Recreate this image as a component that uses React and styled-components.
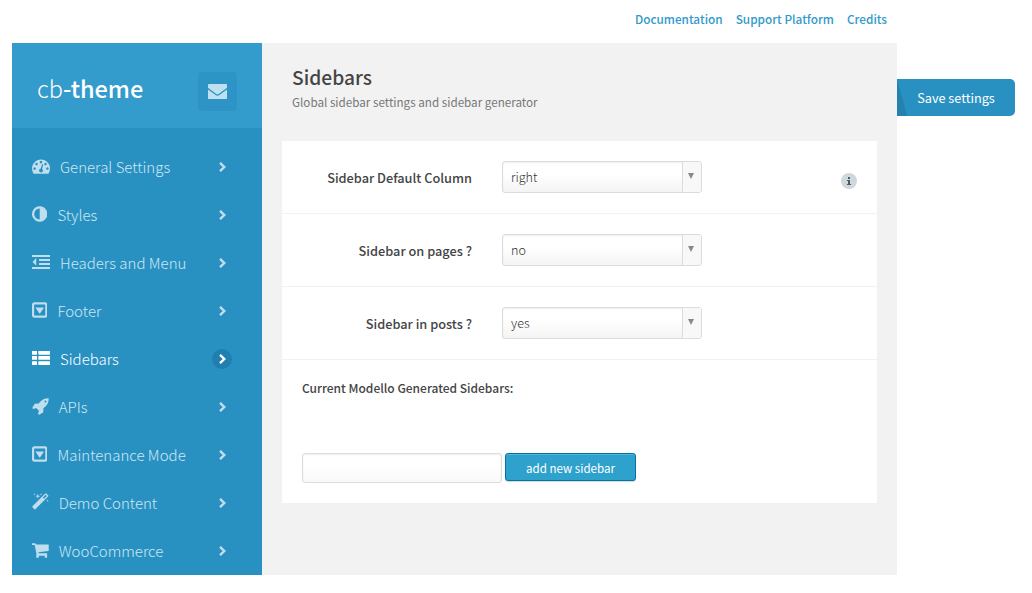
import React from 'react';
import styled, { createGlobalStyle } from 'styled-components';

const GlobalStyle = createGlobalStyle`
  *, *::before, *::after { box-sizing: border-box; }
  body {
    margin: 0;
    background: #fff;
    color: #444;
    font-family: "Noto Sans CJK SC", "Noto Sans", sans-serif;
    overflow: hidden;
  }
  button, input { font-family: inherit; }
`;

const Page = styled.div`
  width: 1032px;
  height: 593px;
  padding-left: 12px;
`;

const TopNav = styled.nav`
  width: 885px;
  height: 43px;
  padding: 9px 10px 0 0;
  display: flex;
  justify-content: flex-end;
  gap: 13px;
`;

const TopLink = styled.a`
  color: #3199cb;
  font-size: 11.8px;
  font-weight: 500;
  line-height: 20px;
  white-space: nowrap;
`;

const Body = styled.div`
  display: flex;
  height: 532px;
  align-items: flex-start;
`;

const Sidebar = styled.aside`
  width: 250px;
  height: 532px;
  background: #2991c2;
`;

const Brand = styled.header`
  height: 85px;
  padding: 5px 25px 0;
  background: #349bcd;
  display: flex;
  align-items: center;
  justify-content: space-between;
`;

const Logo = styled.div`
  color: #fff;
  font-size: 23.5px;
  font-weight: 300;
  line-height: 30px;
  b { font-weight: 500; }
`;

const MailButton = styled.button`
  width: 39px;
  height: 39px;
  margin-top: 7px;
  padding: 0;
  border: 0;
  border-radius: 4px;
  background: #2e94c5;
  color: #bfe0ef;
  display: flex;
  align-items: center;
  justify-content: center;
`;

const Menu = styled.nav`
  padding-top: 15px;
`;

const MenuItem = styled.a`
  height: 48px;
  padding: 0 30px 0 20px;
  display: flex;
  align-items: center;
  color: ${(p) => (p.$active ? '#fff' : '#bfdfee')};
`;

const MenuLabel = styled.span`
  flex: 1;
  margin-left: 10px;
  color: ${(p) => (p.$active ? '#fff' : '#cde7f3')};
  font-size: 15px;
  font-weight: 300;
  line-height: 24px;
  white-space: nowrap;
`;

const Arrow = styled.span`
  width: 20px;
  height: 20px;
  border-radius: 50%;
  background: ${(p) => (p.$active ? '#1f7fae' : 'transparent')};
  display: flex;
  align-items: center;
  justify-content: center;
`;

const Content = styled.main`
  width: 635px;
  height: 532px;
  padding: 20px 20px 0;
  background: #f2f2f2;
`;

const Heading = styled.div`
  height: 78px;
  padding-left: 10px;
`;

const Title = styled.h1`
  margin: 0 0 1px;
  color: #444;
  font-size: 19.2px;
  font-weight: 500;
  line-height: 28px;
`;

const Subtitle = styled.p`
  margin: 0;
  color: #777;
  font-size: 11.67px;
  font-weight: 400;
  line-height: 19px;
`;

const Card = styled.section`
  width: 595px;
  height: 362px;
  background: #fff;
`;

const Field = styled.div`
  height: 73px;
  padding: 20px;
  border-bottom: 1px solid #f2f2f2;
  display: flex;
  align-items: flex-start;
`;

const FieldLabel = styled.label`
  width: 170px;
  margin-right: 30px;
  text-align: right;
  font-size: 12.75px;
  font-weight: 500;
  line-height: 34px;
  white-space: nowrap;
`;

const Select = styled.div`
  width: 200px;
  height: 32px;
  border: 1px solid #dcdcdc;
  border-radius: 3px;
  background: linear-gradient(#fff 40%, #f4f4f4);
  box-shadow: inset 0 1px 2px rgba(0, 0, 0, 0.07);
  display: flex;
  overflow: hidden;
`;

const SelectValue = styled.span`
  flex: 1;
  padding-left: 8px;
  color: #333;
  font-size: 12.6px;
  font-weight: 300;
  line-height: 29px;
`;

const SelectArrow = styled.span`
  width: 19px;
  border-left: 1px solid #dcdcdc;
  background: #f8f8f8;
  display: flex;
  justify-content: center;
  padding-top: 11px;
  &::before {
    content: '';
    width: 0;
    height: 0;
    margin-right: 2px;
    border: 3px solid transparent;
    border-top: 6px solid #888;
    border-bottom: 0;
  }
`;

const Info = styled.span`
  width: 16px;
  height: 16px;
  margin: 12px 0 0 auto;
  border-radius: 50%;
  background: #cfd8dd;
  color: #4c5a62;
  display: flex;
  align-items: center;
  justify-content: center;
`;

const Generator = styled.div`
  padding: 17px 20px 0;
`;

const GeneratorTitle = styled.h2`
  margin: 0 0 55px;
  font-size: 12px;
  font-weight: 500;
  line-height: 21px;
`;

const GeneratorRow = styled.div`
  display: flex;
  align-items: flex-start;
  gap: 3px;
`;

const TextInput = styled.input`
  width: 200px;
  height: 30px;
  padding: 0 8px;
  border: 1px solid #dcdcdc;
  border-radius: 3px;
  background: linear-gradient(#fff 40%, #f9f9f9);
  box-shadow: inset 0 1px 2px rgba(0, 0, 0, 0.07);
`;

const AddButton = styled.button`
  width: 131px;
  height: 28px;
  padding: 2px 0 0;
  border: 1px solid #0074a2;
  border-radius: 3px;
  background: #2ea2cc;
  box-shadow: inset 0 1px 0 rgba(120, 200, 230, 0.5), 0 1px 0 rgba(0, 0, 0, 0.15);
  color: #fff;
  font-size: 11.55px;
  line-height: 24px;
`;

const SaveButton = styled.button`
  width: 118px;
  height: 37px;
  margin-top: 36px;
  padding: 0;
  border: 0;
  border-radius: 0 5px 5px 0;
  background: linear-gradient(to top right, #2581ad 50%, #2991c2 51%) 0 0 / 10px 37px no-repeat, #2991c2;
  color: #fff;
  font-size: 12.7px;
`;

const glyphs = {
  dash: {
    box: [0, 1792],
    d: 'M384 1152q0-53-37.5-90.5t-90.5-37.5-90.5 37.5-37.5 90.5 37.5 90.5 90.5 37.5 90.5-37.5 37.5-90.5zm192-448q0-53-37.5-90.5t-90.5-37.5-90.5 37.5-37.5 90.5 37.5 90.5 90.5 37.5 90.5-37.5 37.5-90.5zm428 481l101-382q6-26-7.5-48.5t-38.5-29.5-48 6.5-30 39.5l-101 382q-60 5-107 43.5t-63 98.5q-20 77 20 146t117 89 146-20 89-117q16-60-6-117t-72-91zm660-33q0-53-37.5-90.5t-90.5-37.5-90.5 37.5-37.5 90.5 37.5 90.5 90.5 37.5 90.5-37.5 37.5-90.5zm-640-640q0-53-37.5-90.5t-90.5-37.5-90.5 37.5-37.5 90.5 37.5 90.5 90.5 37.5 90.5-37.5 37.5-90.5zm448 192q0-53-37.5-90.5t-90.5-37.5-90.5 37.5-37.5 90.5 37.5 90.5 90.5 37.5 90.5-37.5 37.5-90.5zm320 448q0 261-141 483-19 29-54 29h-1402q-35 0-54-29-141-221-141-483 0-182 71-348t191-286 286-191 348-71 348 71 286 191 191 286 71 348z',
  },
  adjust: {
    box: [128, 1536],
    d: 'M896 1440v-1088q-148 0-273 73t-198 198-73 273 73 273 198 198 273 73zm768-544q0 209-103 385.5t-279.5 279.5-385.5 103-385.5-103-279.5-279.5-103-385.5 103-385.5 279.5-279.5 385.5-103 385.5 103 279.5 279.5 103 385.5z',
  },
  outdent: {
    box: [0, 1792],
    d: 'M0 200h1792v200H0zM0 1394h1792v200H0zM704 598h1088v200H704zM704 996h1088v200H704zM420 530v690q0 20-30 10L80 915q-20-19 0-38L390 522q30-20 30 8z',
  },
  caret: {
    box: [128, 1536],
    d: 'M350 128h1092q90 0 156 66t66 156v1092q0 90-66 156t-156 66h-1092q-90 0-156-66t-66-156v-1092q0-90 66-156t156-66zM376 340q-32 0-32 32v1044q0 32 32 32h1040q32 0 32-32v-1044q0-32-32-32zM520 640h752q50 0 20 60l-350 510q-46 60-92 0l-350-510q-30-60 20-60z',
  },
  list: {
    box: [0, 1792],
    d: 'M40 192h420q40 0 40 40v300q0 40-40 40H40q-40 0-40-40V232q0-40 40-40zM670 192h1082q40 0 40 40v300q0 40-40 40H670q-40 0-40-40V232q0-40 40-40zM40 700h420q40 0 40 40v300q0 40-40 40H40q-40 0-40-40V740q0-40 40-40zM670 700h1082q40 0 40 40v300q0 40-40 40H670q-40 0-40-40V740q0-40 40-40zM40 1208h420q40 0 40 40v300q0 40-40 40H40q-40 0-40-40v-300q0-40 40-40zM670 1208h1082q40 0 40 40v300q0 40-40 40H670q-40 0-40-40v-300q0-40 40-40z',
  },
  rocket: {
    box: [0, 1664],
    d: 'M1440 448q0-40-28-68t-68-28-68 28-28 68 28 68 68 28 68-28 28-68zm224-288q0 249-75.5 430.500t-253.500 360.500q-81 80-195 176l-20 379q-2 16-16 26l-384 224q-7 4-16 4-12 0-23-9l-64-64q-13-14-8-32l85-276-281-281-276 85q-3 1-9 1-14 0-23-9l-64-64q-17-19-5-39l224-384q10-14 26-16l379-20q96-114 176-195 188-187 358-258t431-71q14 0 24 9.500t10 22.500z',
  },
  magic: {
    box: [0, 1664],
    d: 'M1190 581l293-293-107-107-293 293zm447-293q0 27-18 45l-1286 1286q-18 18-45 18t-45-18l-198-198q-18-18-18-45t18-45l1286-1286q18-18 45-18t45 18l198 198q18 18 18 45zm-1351-190l98 30-98 30-30 98-30-98-98-30 98-30 30-98zm350 162l196 60-196 60-60 196-60-196-196-60 196-60 60-196zm930 478l98 30-98 30-30 98-30-98-98-30 98-30 30-98zm-640-640l98 30-98 30-30 98-30-98-98-30 98-30 30-98z',
  },
  cart: {
    box: [64, 1664],
    d: 'M80 230h300q44 0 54 44l20 70h1274v620q0 36-36 42L700 1110l20 110h850v440h-240v-190H740v190H490v-290l30-60-190-920H80q-26 0-26-80t26-80z',
  },
};

const GlyphSvg = styled.svg`
  display: block;
  flex: none;
  height: 18px;
  margin-bottom: 2px;
  fill: currentColor;
  fill-rule: evenodd;
`;

function Glyph({ name }) {
  const { box, d } = glyphs[name];
  return (
    <GlyphSvg width={(box[1] * 18) / 1792} viewBox={`${box[0]} 0 ${box[1]} 1792`}>
      <path d={d} />
    </GlyphSvg>
  );
}

const items = [
  ['dash', 'General Settings'],
  ['adjust', 'Styles'],
  ['outdent', 'Headers and Menu'],
  ['caret', 'Footer'],
  ['list', 'Sidebars'],
  ['rocket', 'APIs'],
  ['caret', 'Maintenance Mode'],
  ['magic', 'Demo Content'],
  ['cart', 'WooCommerce'],
];

const fields = [
  ['Sidebar Default Column', 'right', true],
  ['Sidebar on pages ?', 'no'],
  ['Sidebar in posts ?', 'yes'],
];

export default function App() {
  return (
    <Page>
      <GlobalStyle />
      <TopNav>
        <TopLink>Documentation</TopLink>
        <TopLink>Support Platform</TopLink>
        <TopLink>Credits</TopLink>
      </TopNav>
      <Body>
        <Sidebar>
          <Brand>
            <Logo>cb<b>-theme</b></Logo>
            <MailButton aria-label="Messages">
              <svg width="19" height="15" viewBox="0 0 19 15" fill="currentColor">
                <path d="M1 0h17q1 0 1 1v2.800L10.700 9.900q-1.200.8-2.400 0L0 3.800V1q0-1 1-1zM0 5.500l7.600 5.600q1.900 1.200 3.800 0L19 5.500V15H0z" />
              </svg>
            </MailButton>
          </Brand>
          <Menu>
            {items.map(([icon, label]) => {
              const active = label === 'Sidebars';
              return (
                <MenuItem key={label} $active={active}>
                  <Glyph name={icon} />
                  <MenuLabel $active={active}>{label}</MenuLabel>
                  <Arrow $active={active}>
                    <svg width="8" height="10" viewBox="0 0 8 10" fill="none" stroke="currentColor" strokeWidth="2.4">
                      <path d="M2 .9L6.300 5 2 9.100" />
                    </svg>
                  </Arrow>
                </MenuItem>
              );
            })}
          </Menu>
        </Sidebar>
        <Content>
          <Heading>
            <Title>Sidebars</Title>
            <Subtitle>Global sidebar settings and sidebar generator</Subtitle>
          </Heading>
          <Card>
            {fields.map(([label, value, info]) => (
              <Field key={label}>
                <FieldLabel>{label}</FieldLabel>
                <Select>
                  <SelectValue>{value}</SelectValue>
                  <SelectArrow />
                </Select>
                {info && (
                  <Info>
                    <svg width="6" height="8" viewBox="0 0 6 8" fill="currentColor">
                      <path d="M2 0h2v2H2zM1 3h3v4h1v1H1V7h1V4H1z" />
                    </svg>
                  </Info>
                )}
              </Field>
            ))}
            <Generator>
              <GeneratorTitle>Current Modello Generated Sidebars:</GeneratorTitle>
              <GeneratorRow>
                <TextInput aria-label="Sidebar name" />
                <AddButton>add new sidebar</AddButton>
              </GeneratorRow>
            </Generator>
          </Card>
        </Content>
        <SaveButton>Save settings</SaveButton>
      </Body>
    </Page>
  );
}
